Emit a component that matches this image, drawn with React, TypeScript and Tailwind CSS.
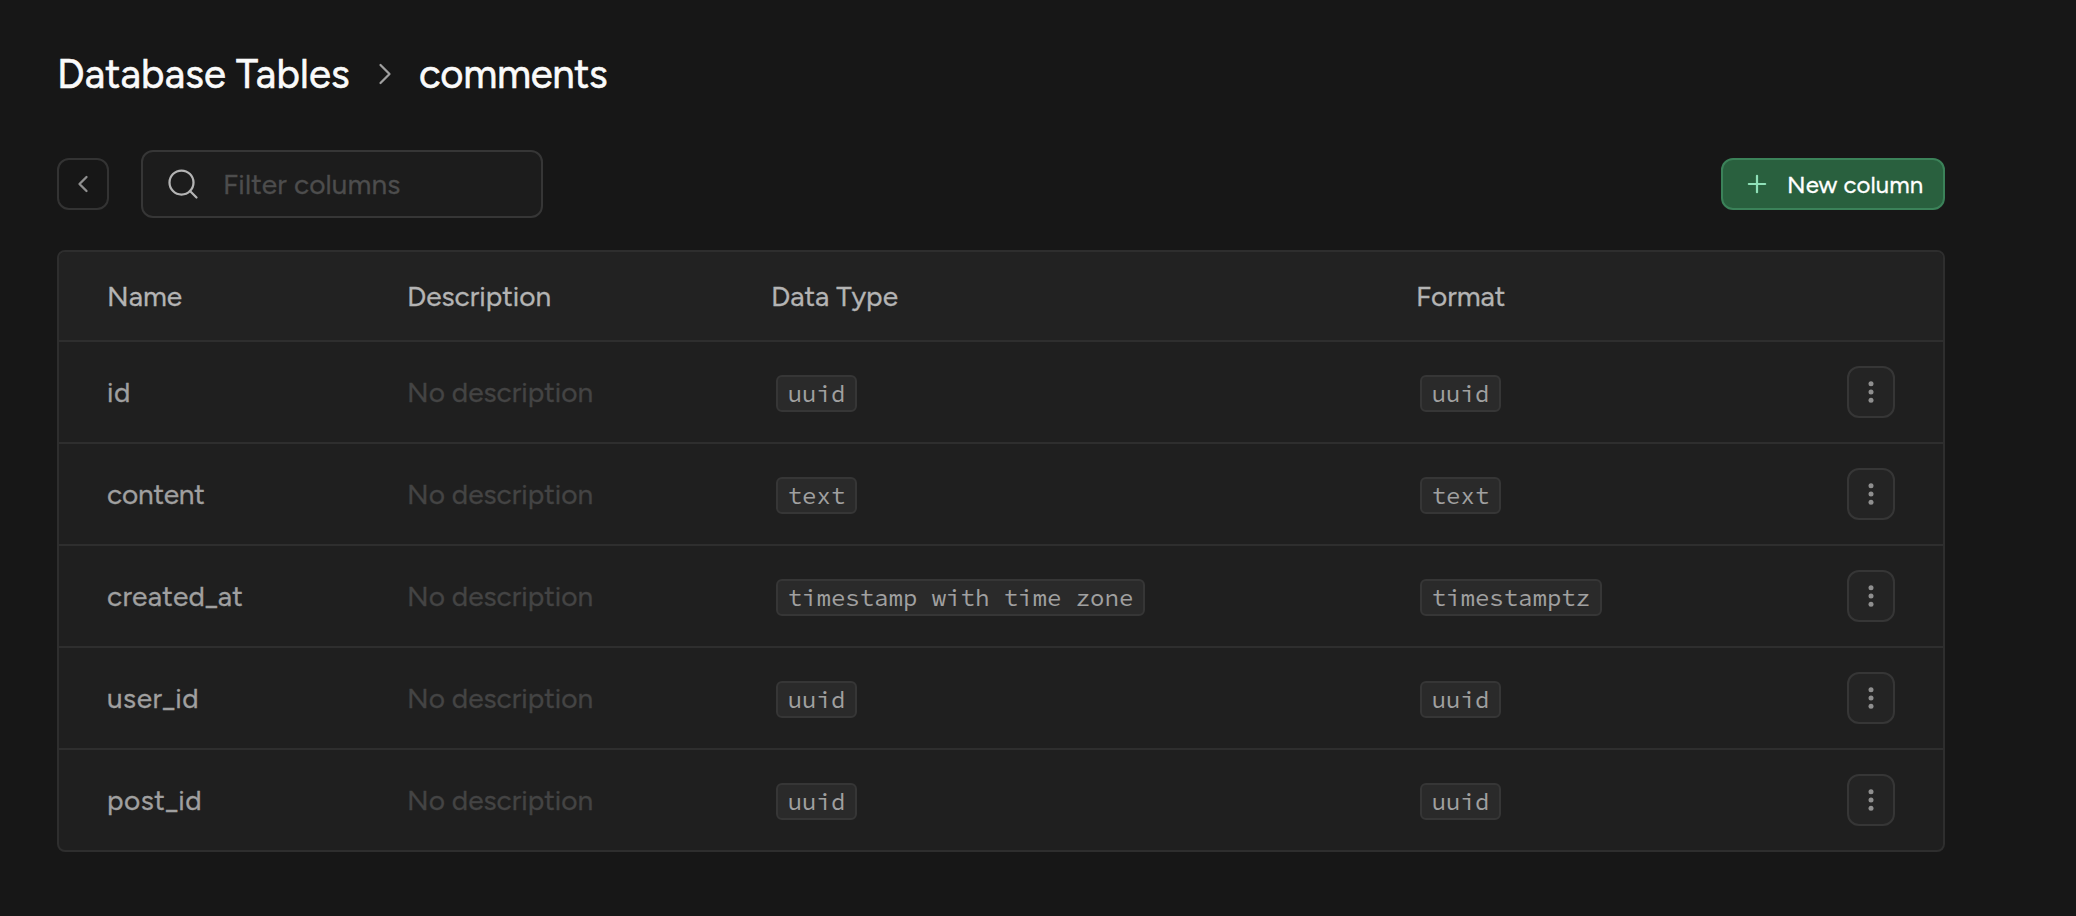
import { ChevronLeft, ChevronRight, Plus, Search } from "lucide-react";

type Column = {
  name: string;
  tracking: string;
  dataType: string;
  format: string;
};

const columns: Column[] = [
  { name: "id", tracking: "tracking-[0.4px]", dataType: "uuid", format: "uuid" },
  { name: "content", tracking: "tracking-[-0.2px]", dataType: "text", format: "text" },
  { name: "created_at", tracking: "tracking-[0.25px]", dataType: "timestamp with time zone", format: "timestamptz" },
  { name: "user_id", tracking: "tracking-[0.5px]", dataType: "uuid", format: "uuid" },
  { name: "post_id", tracking: "tracking-[0.5px]", dataType: "uuid", format: "uuid" },
];

function Chip({ children }: { children: string }) {
  return (
    <code className="mt-[3px] flex h-[37px] w-fit items-center rounded-md border-2 border-[#363636] bg-[#2a2a2a] px-[9.7px] font-['Source_Code_Pro','Liberation_Mono',monospace] text-2xl leading-none whitespace-pre text-[#a0a0a0] [-webkit-text-stroke:0]">
      {children}
    </code>
  );
}

function RowMenu() {
  return (
    <button className="flex h-[52px] w-12 items-center justify-center justify-self-end rounded-xl border-2 border-[#363636] bg-[#242424]">
      <svg className="h-6 w-6 fill-[#8f8f8f]" viewBox="0 0 24 24">
        <circle cx="12" cy="3.8" r="2.5" />
        <circle cx="12" cy="12" r="2.5" />
        <circle cx="12" cy="20.2" r="2.5" />
      </svg>
    </button>
  );
}

export default function App() {
  return (
    <div className="min-h-screen bg-[#171717] pt-12 pl-[57px] font-['Figtree','Lato',sans-serif] antialiased [-webkit-text-stroke:0.3px]">
      <main className="w-[1888px]">
        <h1 className="flex h-[52px] items-center text-[40px] leading-[52px] text-[#fafafa] [-webkit-text-stroke:0.6px]">
          <span className="w-[310px] tracking-[0.17px]">Database Tables</span>
          <ChevronRight className="h-9 w-9 text-[#a0a0a0]" strokeWidth={1.5} />
          <span className="ml-4 tracking-[-0.3px]">comments</span>
        </h1>

        <div className="mt-[50px] flex items-center">
          <button className="flex h-[52px] w-[52px] items-center justify-center rounded-xl border-2 border-[#333333]">
            <ChevronLeft className="h-7 w-7 text-[#8f8f8f]" strokeWidth={2} />
          </button>
          <label className="ml-8 flex h-[68px] w-[402px] items-center rounded-xl border-2 border-[#363636] bg-[#1c1c1c] pl-[22px]">
            <Search className="h-9 w-9 shrink-0 text-[#b4b4b4]" strokeWidth={1.5} />
            <input
              className="ml-[22px] w-[280px] bg-transparent text-[28px] leading-9 tracking-[0.12px] text-[#ededed] outline-none placeholder:text-[#4d4d4d]"
              placeholder="Filter columns"
            />
          </label>
          <button className="ml-auto flex h-[52px] w-56 items-center rounded-xl border-2 border-[#3b8259] bg-[#29603e] pl-5">
            <Plus className="h-7 w-7 text-[#8fe0b8]" strokeWidth={1.9} />
            <span className="ml-4 pt-px text-2xl leading-8 tracking-[0.08px] text-white">New column</span>
          </button>
        </div>

        <section className="mt-8 overflow-hidden rounded-lg border-2 border-[#2e2e2e] bg-[#1f1f1f] text-[28px] leading-9">
          <div className="grid h-[88px] grid-cols-[300px_369px_644px_1fr] items-center bg-[#222222] pr-12 pl-12 text-[#b4b4b4]">
            <span>Name</span>
            <span>Description</span>
            <span className="-ml-[5px]">Data Type</span>
            <span className="-ml-1">Format</span>
          </div>
          {columns.map((column) => (
            <div
              key={column.name}
              className="grid h-[102px] grid-cols-[300px_369px_644px_1fr_48px] items-center border-t-2 border-[#2e2e2e] pr-12 pl-12 text-[#a0a0a0]"
            >
              <span className={column.tracking}>{column.name}</span>
              <span className="text-[#444444]">No description</span>
              <Chip>{column.dataType}</Chip>
              <Chip>{column.format}</Chip>
              <RowMenu />
            </div>
          ))}
        </section>
      </main>
    </div>
  );
}
